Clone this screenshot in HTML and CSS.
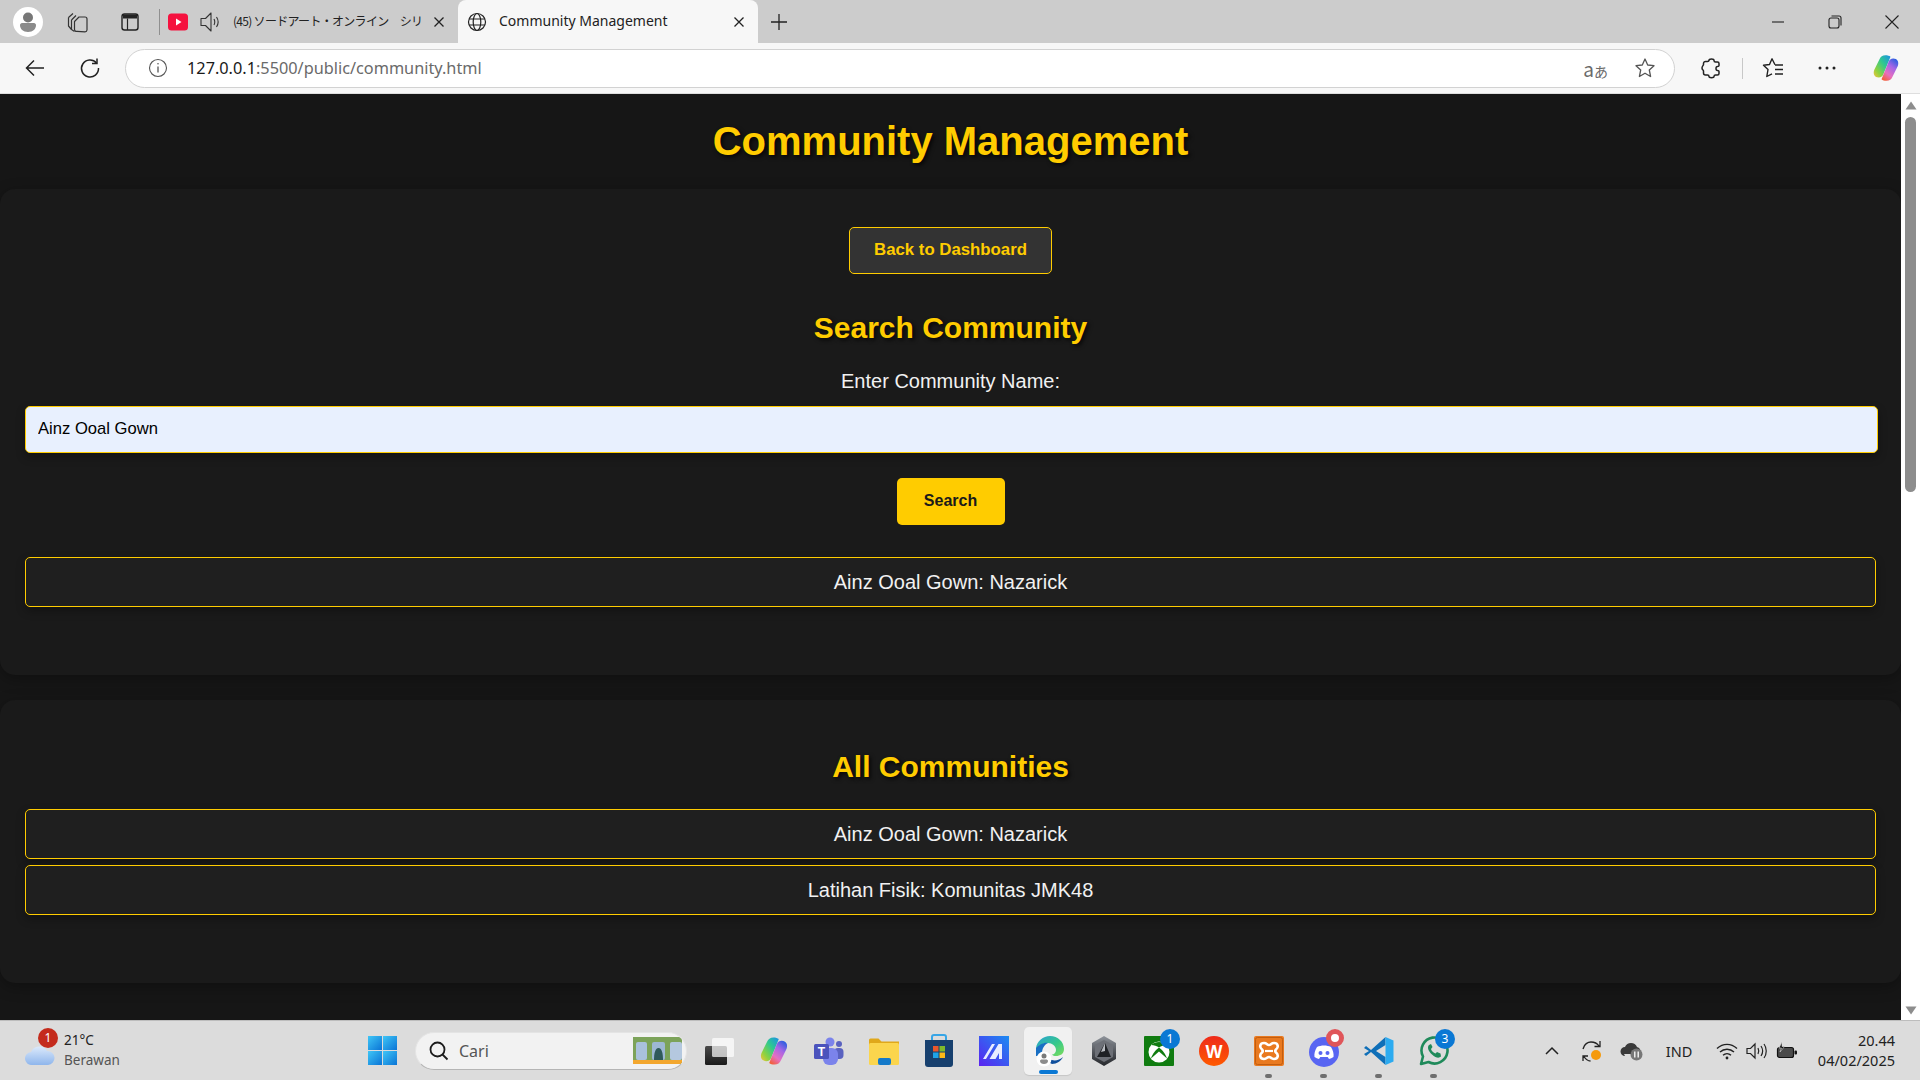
FILE: index.html
```html
<!DOCTYPE html>
<html lang="en">
<head>
  <meta charset="UTF-8" />
  <meta name="viewport" content="width=device-width, initial-scale=1.0"/>
  <title>Community Management</title>
  <link rel="stylesheet" href="styles.css">
</head>
<body>

  <svg class="defs" width="0" height="0" aria-hidden="true">
    <defs>
      <linearGradient id="gCopA" x1="1" y1="0" x2="0" y2="1">
        <stop offset="0" stop-color="#1a8fe8"/><stop offset=".4" stop-color="#2fc98f"/><stop offset=".75" stop-color="#8fd23f"/><stop offset="1" stop-color="#f5c23c"/>
      </linearGradient>
      <linearGradient id="gCopB" x1=".8" y1="0" x2=".2" y2="1">
        <stop offset="0" stop-color="#2a5fe0"/><stop offset=".35" stop-color="#a566e6"/><stop offset=".7" stop-color="#e66fc0"/><stop offset="1" stop-color="#f2603c"/>
      </linearGradient>
      <linearGradient id="gEdge" x1="0" y1="0" x2="1" y2="1">
        <stop offset="0" stop-color="#2b9fd8"/><stop offset=".55" stop-color="#35c98a"/><stop offset="1" stop-color="#7fdc5a"/>
      </linearGradient>
      <linearGradient id="gMaze" x1="0" y1="1" x2="1" y2="0">
        <stop offset="0" stop-color="#5b22f0"/><stop offset="1" stop-color="#1b8cf2"/>
      </linearGradient>
      <linearGradient id="gWin" x1="0" y1="0" x2="1" y2="1">
        <stop offset="0" stop-color="#3fc6f6"/><stop offset="1" stop-color="#0a74d6"/>
      </linearGradient>
      <linearGradient id="gCloud" x1="0" y1="0" x2="0" y2="1">
        <stop offset="0" stop-color="#dbe9fb"/><stop offset="1" stop-color="#8fb6ec"/>
      </linearGradient>
      <linearGradient id="gHex" x1="0" y1="0" x2="0" y2="1">
        <stop offset="0" stop-color="#8f949b"/><stop offset=".6" stop-color="#4a4d53"/><stop offset="1" stop-color="#26282c"/>
      </linearGradient>
      <linearGradient id="gWps" x1="0" y1="0" x2="0" y2="1">
        <stop offset="0" stop-color="#ee2a1a"/><stop offset="1" stop-color="#ff5a00"/>
      </linearGradient>
      <linearGradient id="gTask" x1="0" y1="0" x2="0" y2="1">
        <stop offset="0" stop-color="#4a4a4a"/><stop offset="1" stop-color="#1a1a1a"/>
      </linearGradient>
      <symbol id="copilot" viewBox="0 0 30 30">
        <path d="M19.500 3.800c-1-1-3-1.500-5-1.500-3 0-5 1.500-6 4L3.200 17c-1.500 4 .5 7.500 4.500 7.500 2.500 0 4-1.500 4.800-3.500z" fill="url(#gCopA)"/>
        <path d="M10.500 26.200c1 1 3 1.500 5 1.500 3 0 5-1.500 6-4l5.300-10.700c1.500-4-.5-7.500-4.500-7.500-2.500 0-4 1.500-4.800 3.500z" fill="url(#gCopB)"/>
      </symbol>
    </defs>
  </svg>

  <!-- tab strip -->
  <header class="tabbar">
    <div class="slot avatar">
      <svg width="30" height="30" viewBox="0 0 30 30"><circle cx="15" cy="15" r="15" fill="#fff"/><circle cx="15" cy="10.500" r="5" fill="#777"/><path d="M7 18c0-1 1-2 2-2h12c1 0 2 1 2 2 0 4-3 7-8 7s-8-3-8-7z" fill="#8b8b8b"/></svg>
    </div>
    <div class="slot collections">
      <svg width="24" height="24" viewBox="0 0 24 24" fill="none" stroke="#333" stroke-width="1.200" stroke-linejoin="round"><path d="M2.500 7.500L7 3.500M2.500 7.500v8.500l3 3.500"/><path d="M5.500 10L10 5.500M5.500 10v9.500l3 2"/><path d="M8.500 11.500L13 7h6a2 2 0 0 1 2 2v11a2 2 0 0 1-2 1.800l-8-.5a2 2 0 0 1-2.500-2z"/></svg>
    </div>
    <div class="slot vtabs">
      <svg width="20" height="20" viewBox="0 0 20 20"><rect x="2" y="2" width="16" height="16" rx="2.500" fill="none" stroke="#222" stroke-width="1.400"/><path d="M3 2.500h14v4H3z" fill="#222"/><path d="M7.500 6.500V18" stroke="#222" stroke-width="1.200"/></svg>
    </div>
    <div class="tab-sep"></div>
    <div class="tab">
      <svg class="tab-yt" width="20" height="20" viewBox="0 0 20 20"><rect y="1.500" width="20" height="17" rx="3.500" fill="#f5123f"/><path d="M8 6.500l5.500 3.500L8 13.500z" fill="#fff"/></svg>
      <svg class="tab-sound" width="20" height="20" viewBox="0 0 20 20" fill="none" stroke="#333" stroke-width="1.100" stroke-linejoin="round"><path d="M1 6.500h4.500L11 1v18l-5.500-5.500H1z"/><path d="M14 7c1 2 1 4 0 6M16.500 5c2 3 2 7 0 10"/></svg>
      <span class="tab-title tab-title-jp">(45) ソードアート・オンライン　シリ</span>
      <svg class="tab-close" width="20" height="20" viewBox="0 0 20 20" stroke="#222" stroke-width="1.300"><path d="M5.500 5.500l9 9M14.500 5.500l-9 9"/></svg>
    </div>
    <div class="tab tab-active">
      <svg width="20" height="20" viewBox="0 0 20 20" fill="none" stroke="#222" stroke-width="1.200"><circle cx="10" cy="10" r="8.500"/><ellipse cx="10" cy="10" rx="3.800" ry="8.500"/><path d="M2 7h16M2 13h16"/></svg>
      <span class="tab-title">Community Management</span>
      <svg class="tab-close" width="20" height="20" viewBox="0 0 20 20" stroke="#222" stroke-width="1.300"><path d="M5.500 5.500l9 9M14.500 5.500l-9 9"/></svg>
    </div>
    <div class="slot newtab">
      <svg width="20" height="20" viewBox="0 0 20 20" stroke="#222" stroke-width="1.300"><path d="M10 2v16M2 10h16"/></svg>
    </div>
    <div class="winctl">
      <div class="slot winbtn"><svg width="14" height="14" viewBox="0 0 14 14" stroke="#222" stroke-width="1.100"><path d="M1 7h12"/></svg></div>
      <div class="slot winbtn"><svg width="14" height="14" viewBox="0 0 14 14" fill="none" stroke="#222" stroke-width="1.100"><rect x="1" y="3" width="10" height="10" rx="2"/><path d="M3.500 1h7.500a2 2 0 0 1 2 2v7.500"/></svg></div>
      <div class="slot winbtn"><svg width="14" height="14" viewBox="0 0 14 14" stroke="#222" stroke-width="1.100"><path d="M.5 .5l13 13M13.500 .5l-13 13"/></svg></div>
    </div>
  </header>

  <!-- address bar -->
  <nav class="toolbar">
    <div class="slot tb-back">
      <svg width="22" height="22" viewBox="0 0 22 22" fill="none" stroke="#222" stroke-width="1.500"><path d="M20 11H3M10 3.500L2.500 11l7.500 7.500"/></svg>
    </div>
    <div class="slot tb-reload">
      <svg width="22" height="22" viewBox="0 0 22 22" fill="none" stroke="#222" stroke-width="1.500"><path d="M17.500 6A8.500 8.500 0 1 0 19.500 11"/><path d="M18 1.500V6.500H13"/></svg>
    </div>
    <div class="omnibox">
      <svg class="omni-info" width="20" height="20" viewBox="0 0 20 20" fill="none" stroke="#555" stroke-width="1.100"><circle cx="10" cy="10" r="8.500"/><path d="M10 8.500v6" stroke-width="1.300"/><circle cx="10" cy="5.800" r=".8" fill="#555" stroke="none"/></svg>
      <span class="url"><span class="url-host">127.0.0.1</span>:5500/public/community.html</span>
      <span class="omni-read"><span class="omni-a">a</span><span class="omni-jp">あ</span></span>
      <svg class="omni-star" width="22" height="22" viewBox="0 0 22 22" fill="none" stroke="#555" stroke-width="1.300"><path d="M11 2l2.700 6 6.300 .7-4.700 4.300 1.300 6.500L11 16.200 5.400 19.500l1.300-6.500L2 8.700 8.300 8z" stroke-linejoin="round"/></svg>
    </div>
    <div class="slot tb-ext">
      <svg width="22" height="22" viewBox="0 0 22 22" fill="none" stroke="#222" stroke-width="1.500"><path d="M8 3.500c0-2 5-2 5 0 0 1 .5 1.500 1.500 1.500h2a1.500 1.500 0 0 1 1.500 1.500v2c0 .8-.7 1-1.500 1-2 0-2 4 0 4 .8 0 1.500.3 1.500 1v2a1.500 1.500 0 0 1-1.500 1.500h-2c-1 0-1.500.7-1.500 1.500 0 1.500-5 1.500-5 0 0-.8-.5-1.500-1.500-1.500h-2a2 2 0 0 1-2-2v-2c0-1-1.500-1-1.500-3s1.500-2.500 1.500-3.500v-1a2 2 0 0 1 2-2h2c1 0 1.500-.5 1.500-1.500z" stroke-linejoin="round"/></svg>
    </div>
    <div class="tb-sep"></div>
    <div class="slot tb-fav">
      <svg width="22" height="22" viewBox="0 0 22 22" fill="none" stroke="#222" stroke-width="1.400"><path d="M13 7.800L10 1.800 7.500 7.500 1.500 8.300 6 12.500 4.800 19.500 10 16.800" stroke-linejoin="round"/><path d="M13 8h8M13 12.500h8M13 17h8"/></svg>
    </div>
    <div class="slot tb-more">
      <svg width="20" height="6" viewBox="0 0 20 6" fill="#222"><circle cx="3" cy="3" r="1.500"/><circle cx="10" cy="3" r="1.500"/><circle cx="17" cy="3" r="1.500"/></svg>
    </div>
    <div class="slot tb-copilot">
      <svg width="30" height="30"><use href="#copilot"/></svg>
    </div>
  </nav>

  <div class="viewport">
    <main class="page">
      <h1>Community Management</h1>

      <section class="card card-search">
        <a class="btn-back" href="#">Back to Dashboard</a>
        <h2>Search Community</h2>
        <label class="search-label" for="community">Enter Community Name:</label>
        <input class="search-input" type="text" id="community" value="Ainz Ooal Gown" />
        <button class="btn-search" type="button">Search</button>
        <div class="item item-result">Ainz Ooal Gown: Nazarick</div>
      </section>

      <section class="card card-all">
        <h2>All Communities</h2>
        <ul class="list">
          <li class="item">Ainz Ooal Gown: Nazarick</li>
          <li class="item">Latihan Fisik: Komunitas JMK48</li>
        </ul>
      </section>

      <section class="card"></section>
    </main>

    <div class="scrollbar">
      <svg class="sb-arrow" width="12" height="9" viewBox="0 0 12 9"><path d="M6 .5L11.500 8.500H.5z" fill="#8d8d8d"/></svg>
      <div class="sb-thumb"></div>
      <svg class="sb-arrow sb-arrow-down" width="12" height="9" viewBox="0 0 12 9"><path d="M6 8.500L11.500 .5H.5z" fill="#8d8d8d"/></svg>
    </div>
  </div>

  <!-- windows taskbar -->
  <footer class="taskbar">
    <div class="weather">
      <svg class="weather-cloud" width="30" height="20" viewBox="0 0 30 20"><path d="M7 20a6.500 6.500 0 0 1-1-13A9 9 0 0 1 22 6a7 7 0 0 1 1 14z" fill="url(#gCloud)"/></svg>
      <span class="weather-badge">1</span>
      <div class="weather-text">
        <span class="weather-temp">21°C</span>
        <span class="weather-desc">Berawan</span>
      </div>
    </div>

    <svg class="start" width="29" height="29" viewBox="0 0 29 29" fill="url(#gWin)"><rect width="14" height="14"/><rect x="15" width="14" height="14"/><rect y="15" width="14" height="14"/><rect x="15" y="15" width="14" height="14"/></svg>

    <div class="searchbox">
      <svg width="22" height="22" viewBox="0 0 22 22" fill="none" stroke="#1c1c1c" stroke-width="1.800"><circle cx="9.500" cy="9.500" r="7"/><path d="M14.500 14.500l5 5"/></svg>
      <span class="search-text">Cari</span>
      <svg class="search-art" width="49" height="27" viewBox="0 0 49 27"><rect width="49" height="27" fill="#7ca35a"/><rect y="23" width="49" height="4" fill="#f3a72f"/><rect x="3" y="5" width="11" height="18" rx="2" fill="#a9c1dc"/><rect x="19" y="5" width="13" height="18" rx="2" fill="#9db8d4"/><path d="M21 23c0-6 1-12 4.500-12S30 17 30 23z" fill="#2f5a5a"/><rect x="37" y="5" width="12" height="18" rx="2" fill="#b4c8df"/></svg>
    </div>

    <div class="apps">
      <div class="app">
        <svg width="32" height="32" viewBox="2 0 32 32"><rect x="4" y="11" width="22" height="19" rx="1.500" fill="url(#gTask)"/><rect x="11" y="3" width="22" height="19" rx="1.500" fill="#fff" fill-opacity=".7"/></svg>
      </div>
      <div class="app"><svg width="32" height="32"><use href="#copilot"/></svg></div>
      <div class="app">
        <svg width="32" height="32" viewBox="0 0 32 32"><circle cx="26" cy="9" r="3" fill="#5a62c0"/><rect x="21" y="13" width="9.500" height="11" rx="4" fill="#5a62c0"/><circle cx="17" cy="7" r="4.500" fill="#7b83eb"/><rect x="10" y="13" width="15" height="17" rx="6" fill="#7b83eb"/><rect x="1" y="9" width="15" height="15" rx="1.500" fill="#4b53bc"/><text class="app-letter" x="8.500" y="21" font-size="12">T</text></svg>
      </div>
      <div class="app">
        <svg width="32" height="32" viewBox="0 0 32 32"><path d="M1 5a1.500 1.500 0 0 1 1.500-1.500h8l3 3H31V10H1z" fill="#e0a81a"/><rect x="1" y="8" width="30" height="22" rx="1.500" fill="#fbd54d"/><rect x="10" y="23" width="13" height="7" rx="2" fill="#1479c9"/></svg>
      </div>
      <div class="app">
        <svg width="32" height="34" viewBox="0 0 32 34"><path d="M9 7V3a2 2 0 0 1 2-2h10a2 2 0 0 1 2 2v4" fill="none" stroke="#37a5e6" stroke-width="2"/><path d="M2 6h28v24a3 3 0 0 1-3 3H5a3 3 0 0 1-3-3z" fill="#17406e"/><rect x="10" y="12" width="5.500" height="5.500" fill="#e8572c"/><rect x="16.500" y="12" width="5.500" height="5.500" fill="#7fba2a"/><rect x="10" y="18.500" width="5.500" height="5.500" fill="#1fa3e8"/><rect x="16.500" y="18.500" width="5.500" height="5.500" fill="#fbb917"/></svg>
      </div>
      <div class="app">
        <svg width="30" height="30" viewBox="0 0 30 30"><rect width="30" height="30" fill="url(#gMaze)"/><path d="M4 23L13 8h3L7 23zM10.500 23l9-15h3.500v15h-3v-6l-3.500 6z" fill="#e8ecff"/></svg>
      </div>
      <div class="app app-active">
        <svg width="32" height="32" viewBox="0 0 32 32"><path d="M3 13C4 6 10 1 17 1c8 0 14 6 14 13 0 5-4 7-8 7-2 0-3-.5-4-1.500 2 0 4-2 4-4.500 0-4-4-7-8-7-5 0-9 3-12 5.500z" fill="url(#gEdge)"/><path d="M3 13c3-3 8-6 12-5-4 2-6 6-6 10 0 1 0 2 .5 3H3z" fill="#1a70c4"/><path d="M19 29c5 0 9-3 11-7-3 3-8 4-11 3-2 0-3-1-4-2 0 3 1 5 4 6z" fill="#0f4f9c"/><circle cx="11" cy="24" r="7.500" fill="#fff"/><circle cx="11" cy="21" r="2.500" fill="#7a7a7a"/><path d="M7 26c0-1 1-1.500 2-1.500h4c1 0 2 .5 2 1.500 0 2-1.800 3-4 3s-4-1-4-3z" fill="#8b8b8b"/></svg>
        <span class="app-bar app-bar-blue"></span>
      </div>
      <div class="app">
        <svg width="28" height="32" viewBox="0 0 28 32"><path d="M14 1L26 8v16l-12 7L2 24V8z" fill="url(#gHex)"/><path d="M14 5L23 10v12l-9 5-9-5V10z" fill="#6d7077"/><path d="M15 8L21 22H7z" fill="#1f2125"/><path d="M15 8L11 17l4-1z" fill="#b9bcc1"/></svg>
      </div>
      <div class="app">
        <svg width="30" height="30" viewBox="0 0 30 30"><rect width="30" height="30" rx="1" fill="#107c10"/><circle cx="15" cy="16" r="10.500" fill="#fff"/><path d="M15 11.500c-3 2-7 7-8 11l8-7 8 7c-1-4-5-9-8-11z" fill="#107c10"/><path d="M7 9c3 0 6 1 8 2.500 2-1.500 5-2.500 8-2.500-2-2-5-3-8-3s-6 1-8 3z" fill="#107c10"/></svg>
        <span class="app-badge">1</span>
      </div>
      <div class="app">
        <svg width="30" height="30" viewBox="0 0 30 30"><circle cx="15" cy="15" r="15" fill="url(#gWps)"/><text class="app-letter" x="15" y="21.500" font-size="18">W</text></svg>
      </div>
      <div class="app">
        <svg width="30" height="30" viewBox="0 0 30 30" fill="none"><rect width="30" height="30" rx="2" fill="#e9791f"/><rect x="1.500" y="1.500" width="27" height="27" rx="2" stroke="#c25e10"/><path d="M10 7C13 7 13 9 15 9C17 9 17 7 20 7C24 7 25 11 22 13.500C21 14.500 21 15.500 22 16.500C25 19 24 23 20 23C17 23 17 21 15 21C13 21 13 23 10 23C6 23 5 19 8 16.500C9 15.500 9 14.500 8 13.500C5 11 6 7 10 7Z" stroke="#fff" stroke-width="2.600"/><path d="M11 15h8" stroke="#fff" stroke-width="2.200"/></svg>
        <span class="app-bar"></span>
      </div>
      <div class="app">
        <svg width="30" height="32" viewBox="0 0 30 32"><circle cx="15" cy="17" r="15" fill="#5865f2"/><path d="M8 12c4-2 10-2 14 0 2 3 3 7 2.500 10-1.500 1-3 1.700-4.500 2l-1.300-2h-7.400L10 24c-1.500-.3-3-1-4.500-2C5 19 6 15 8 12z" fill="#fff"/><circle cx="11.500" cy="18" r="2" fill="#5865f2"/><circle cx="18.500" cy="18" r="2" fill="#5865f2"/></svg>
        <span class="app-dot"></span>
        <span class="app-bar"></span>
      </div>
      <div class="app">
        <svg width="30" height="30" viewBox="0 0 30 30"><path d="M21.500 1L7 14 2 10 0 12l5 3-5 3 2 2 5-4 14.500 13V21L12 15l9.500-6z" fill="#0f6fb8"/><path d="M21.500 1L29.500 4.500v21L21.500 29z" fill="#2cabf0"/></svg>
        <span class="app-bar"></span>
      </div>
      <div class="app">
        <svg width="30" height="30" viewBox="0 0 30 30" fill="none"><path d="M2 28l2-7.500A13 13 0 1 1 9.500 26z" stroke="#1f8a5a" stroke-width="2.600" stroke-linejoin="round"/><path d="M10 9c-2 2-1 6 3 9.500s7 4 9 2l-.5-3-3.500-1.500-1.500 1.500c-2-.5-4-2.500-4.500-4.500L13.500 11 12 8z" fill="#1f8a5a"/></svg>
        <span class="app-badge">3</span>
        <span class="app-bar"></span>
      </div>
    </div>

    <div class="tray">
      <div class="tray-slot">
        <svg width="14" height="9" viewBox="0 0 14 9" fill="none" stroke="#222" stroke-width="1.500"><path d="M1 8l6-6 6 6"/></svg>
      </div>
      <div class="tray-slot">
        <svg width="24" height="24" viewBox="0 0 24 24" fill="none" stroke="#222" stroke-width="1.300"><path d="M3 10c1-5 5-7 8-7s6 1 8 4M20 2v5.500h-5.500"/><path d="M3 22v-5h5M3.500 17c2 3 4 5 7 5"/><circle cx="16" cy="16" r="5" fill="#f59a0c" stroke="none"/></svg>
      </div>
      <div class="tray-slot">
        <svg width="24" height="22" viewBox="0 0 24 22"><path d="M5 16a4.500 4.500 0 0 1 0-9 6.500 6.500 0 0 1 12 0 4 4 0 0 1 2 7H5z" fill="#3a3a3a"/><path d="M4 14h11v2H5z" fill="#ddd"/><circle cx="16.500" cy="14.500" r="6" fill="#777"/><path d="M14.800 11.500v6M18.200 11.500v6" stroke="#fff" stroke-width="1.300"/></svg>
      </div>
      <span class="tray-slot tray-lang">IND</span>
      <div class="tray-slot tray-wifi">
        <svg width="22" height="18" viewBox="0 0 22 18" fill="none" stroke="#222" stroke-width="1.400"><path d="M1 6.500c6-5.500 14-5.500 20 0M4 10c4-3.700 10-3.700 14 0M7 13.300c2.300-2 5.700-2 8 0"/><circle cx="11" cy="16" r="1.400" fill="#222" stroke="none"/></svg>
      </div>
      <div class="tray-slot tray-icon">
        <svg width="22" height="18" viewBox="0 0 22 18" fill="none" stroke="#222" stroke-width="1.200"><path d="M1 6.500h3.500L9 2v14l-4.500-4.500H1z"/><path d="M12 6c1 2 1 4 0 6M15 4c2 3 2 7 0 10M18 2c3 4 3 10 0 14"/></svg>
      </div>
      <div class="tray-slot tray-icon">
        <svg width="22" height="18" viewBox="0 0 22 18"><rect x="1.500" y="5.500" width="16" height="10" rx="2" fill="#4a4a4a" stroke="#111" stroke-width="1.200"/><rect x="18.500" y="8.500" width="2.500" height="4" rx="1" fill="#111"/><path d="M6 0L3 6h2.500L4 10l4.500-5.500H6z" fill="#111" stroke="#dcdcdc" stroke-width=".6"/></svg>
      </div>
      <div class="clock">
        <span>20.44</span>
        <span>04/02/2025</span>
      </div>
    </div>
  </footer>

</body>
</html>
```

FILE: styles.css
```css
:root {
  --gold: #ffcc00;
  --black: #161616;
  --dark: #1a1a1a;
  --chrome: #f7f7f7;
}

* {
  box-sizing: border-box;
}

html, body {
  height: 100%;
}

body {
  margin: 0;
  overflow: hidden;
  display: flex;
  flex-direction: column;
  font-family: "Liberation Sans", Arial, sans-serif;
  background-color: var(--black);
}

.defs {
  position: absolute;
}

.slot {
  display: flex;
  align-items: center;
  justify-content: center;
  width: 30px;
  flex: none;
}

/* tab strip */
.tabbar {
  display: flex;
  align-items: center;
  flex: none;
  height: 43px;
  background-color: #cccccc;
  font-family: "Noto Sans", sans-serif;
}

.avatar { margin-left: 13px; }
.collections { margin-left: 20px; }
.vtabs { margin-left: 22px; }

.tab-sep {
  width: 1px;
  height: 26px;
  margin-left: 14px;
  background-color: #8f8f8f;
}

.tab {
  display: flex;
  align-items: center;
  flex: none;
  width: 298px;
  height: 43px;
  padding-left: 8px;
  color: #222;
  font-size: 14px;
}

.tab-sound { margin-left: 12px; flex: none; }
.tab-yt { flex: none; }

.tab-title {
  margin-left: 13px;
  margin-top: -2px;
  white-space: nowrap;
  flex: none;
}

.tab-title-jp {
  width: 188px;
  font-family: "Noto Sans CJK JP", "Noto Sans", sans-serif;
  font-size: 12px;
  letter-spacing: -0.7px;
}

.tab-close {
  flex: none;
  margin-left: 8px;
}

.tab-active {
  width: 300px;
  padding-left: 9px;
  background-color: var(--chrome);
  border-radius: 8px 8px 0 0;
}

.tab-active .tab-title {
  width: 222px;
  margin-left: 12px;
}

.newtab { margin-left: 6px; }

.winctl {
  display: flex;
  margin-left: auto;
}

.winbtn { width: 57px; }

/* address bar */
.toolbar {
  display: flex;
  align-items: center;
  flex: none;
  height: 51px;
  background-color: var(--chrome);
  border-bottom: 1px solid #dedede;
}

.tb-back { margin-left: 20px; }
.tb-reload { margin-left: 25px; }

.omnibox {
  display: flex;
  align-items: center;
  flex: none;
  width: 1550px;
  height: 39px;
  margin-left: 20px;
  padding: 0 18px 0 22px;
  background-color: #fff;
  border: 1px solid #d2d2d2;
  border-radius: 20px;
}

.url {
  margin-left: 19px;
  color: #6a6a6a;
  font-family: "Noto Sans", sans-serif;
  font-size: 16.300px;
  white-space: nowrap;
}

.url-host { color: #1a1a1a; }

.omni-read {
  display: flex;
  align-items: baseline;
  margin-left: auto;
  color: #6a6a6a;
  font-family: "Noto Sans CJK JP", sans-serif;
}

.omni-a { font-size: 19px; }
.omni-jp { font-size: 14px; }

.omni-star { margin-left: 26px; }

.tb-ext { margin-left: 22px; }

.tb-sep {
  width: 1px;
  height: 21px;
  margin-left: 15px;
  background-color: #c8c8c8;
}

.tb-fav { margin-left: 15px; }
.tb-more { margin-left: 24px; }
.tb-copilot { margin-left: 29px; }

/* page */
.viewport {
  display: flex;
  flex: none;
  height: 926px;
}

.page {
  flex: 1;
  min-width: 0;
  overflow: hidden;
  background-color: var(--black);
  text-align: center;
}

h1 {
  margin: 0;
  padding-top: 22px;
  height: 95px;
  color: var(--gold);
  font-size: 40px;
  line-height: 50px;
  text-shadow: 2px 2px 4px rgba(0, 0, 0, 0.8);
}

h2 {
  margin: 0;
  color: var(--gold);
  font-size: 30px;
  line-height: 37px;
  text-shadow: 2px 2px 4px rgba(0, 0, 0, 0.8);
}

.card {
  display: flex;
  flex-direction: column;
  align-items: center;
  margin-bottom: 25px;
  padding: 0 25px;
  background-color: var(--dark);
  border-radius: 15px;
  box-shadow: 0 4px 15px rgba(0, 0, 0, 0.3);
}

.card-search {
  height: 486px;
  padding-top: 38px;
}

.card-all {
  height: 283px;
  padding-top: 48px;
}

.btn-back {
  display: flex;
  align-items: center;
  justify-content: center;
  width: 203px;
  height: 47px;
  padding-bottom: 2px;
  color: var(--gold);
  background-color: #333333;
  border: 1px solid var(--gold);
  border-radius: 5px;
  font-size: 16.800px;
  font-weight: bold;
  text-decoration: none;
}

.card-search h2 {
  margin-top: 35px;
}

.search-label {
  margin-top: 23px;
  color: #f1f1f1;
  font-size: 20px;
  line-height: 24px;
}

.search-input {
  display: block;
  width: 1853px;
  flex: none;
  height: 47px;
  margin-top: 13px;
  padding: 0 12px 2px;
  color: #000;
  background-color: #e8f0fe;
  border: 1px solid var(--gold);
  border-radius: 5px;
  font-family: inherit;
  font-size: 16.600px;
  box-shadow: 0 4px 10px rgba(0, 0, 0, 0.3);
  align-self: flex-start;
}

.btn-search {
  width: 108px;
  height: 47px;
  margin-top: 25px;
  padding: 0 0 2px;
  color: #1a1a1a;
  background-color: var(--gold);
  border: none;
  border-radius: 5px;
  font-family: inherit;
  font-size: 16px;
  font-weight: bold;
}

.item {
  display: flex;
  align-items: center;
  justify-content: center;
  width: 100%;
  height: 50px;
  color: #f1f1f1;
  background-color: #1f1f1f;
  border: 1px solid var(--gold);
  border-radius: 5px;
  font-size: 20px;
  box-shadow: 0 4px 10px rgba(0, 0, 0, 0.3);
}

.item-result {
  margin-top: 32px;
}

.list {
  display: flex;
  flex-direction: column;
  gap: 6px;
  width: 100%;
  margin: 24px 0 0;
  padding: 0;
  list-style: none;
}

/* scrollbar */
.scrollbar {
  display: flex;
  flex-direction: column;
  align-items: center;
  flex: none;
  width: 19px;
  padding: 7px 0 5px;
  background-color: #fff;
}

.sb-thumb {
  width: 11px;
  height: 375px;
  margin-top: 7px;
  background-color: #8d8d8d;
  border-radius: 6px;
}

.sb-arrow-down {
  margin-top: auto;
}

/* taskbar */
.taskbar {
  display: flex;
  align-items: center;
  flex: none;
  height: 60px;
  color: #222;
  background-color: #dcdcdc;
  border-top: 1px solid #bdbdbd;
  font-family: "Noto Sans", sans-serif;
}

.weather {
  position: relative;
  display: flex;
  align-items: center;
  flex: none;
  width: 343px;
  margin-left: 25px;
}

.weather-cloud {
  margin-top: 8px;
}

.weather-badge {
  position: absolute;
  top: -3px;
  left: 13px;
  width: 20px;
  height: 20px;
  color: #fff;
  background-color: #c42b1c;
  border-radius: 50%;
  font-size: 12px;
  line-height: 20px;
  text-align: center;
}

.weather-text {
  display: flex;
  flex-direction: column;
  margin-left: 9px;
  margin-top: -1px;
  font-size: 13.500px;
  line-height: 20px;
}

.weather-desc { color: #555; }

.start { flex: none; }

.searchbox {
  display: flex;
  align-items: center;
  flex: none;
  width: 272px;
  height: 38px;
  margin-left: 18px;
  padding: 0 4px 0 12px;
  background-color: #f2f2f2;
  border: 1px solid #e4e4e4;
  border-bottom-color: #b5b5b5;
  border-radius: 19px;
  overflow: hidden;
}

.search-text {
  margin-left: 9px;
  color: #555;
  font-size: 16px;
}

.search-art {
  margin-left: auto;
}

.apps {
  display: flex;
  flex: none;
  margin-left: 4px;
}

.app {
  position: relative;
  display: flex;
  align-items: center;
  justify-content: center;
  width: 55px;
  height: 59px;
}

.app-active::before {
  content: "";
  position: absolute;
  top: 6px;
  bottom: 5px;
  left: 3px;
  right: 4px;
  background-color: #f1f1f1;
  border-radius: 5px;
  box-shadow: 0 1px 1px rgba(0, 0, 0, 0.1);
}

.app svg {
  position: relative;
}

.app-letter {
  fill: #fff;
  font-family: "Liberation Sans", sans-serif;
  font-weight: bold;
  text-anchor: middle;
}

.app-bar {
  position: absolute;
  bottom: 2px;
  left: 24px;
  width: 7px;
  height: 4px;
  background-color: #6f6f6f;
  border-radius: 2px;
}

.app-bar-blue {
  left: 18px;
  width: 19px;
  bottom: 6px;
  background-color: #0a78d4;
}

.app-badge {
  position: absolute;
  top: 8px;
  right: 6px;
  width: 20px;
  height: 20px;
  color: #fff;
  background-color: #0a78d4;
  border-radius: 50%;
  font-size: 12px;
  line-height: 20px;
  text-align: center;
}

.app-dot {
  position: absolute;
  top: 8px;
  right: 7px;
  width: 18px;
  height: 18px;
  background-color: #fff;
  border: 5px solid #e0565a;
  border-radius: 50%;
}

.tray {
  display: flex;
  align-items: center;
  flex: 1;
  padding-left: 71px;
  font-size: 14.500px;
}

.tray-slot {
  display: flex;
  align-items: center;
  justify-content: center;
  flex: none;
  width: 40px;
}

.tray-lang {
  width: 54px;
}

.tray-wifi {
  width: 30px;
  margin-left: 6px;
}

.tray-icon {
  width: 30px;
}

.clock {
  display: flex;
  flex-direction: column;
  flex: 1;
  align-items: flex-end;
  margin-top: -2px;
  padding-right: 25px;
  line-height: 20px;
  font-size: 14.500px;
}
```
